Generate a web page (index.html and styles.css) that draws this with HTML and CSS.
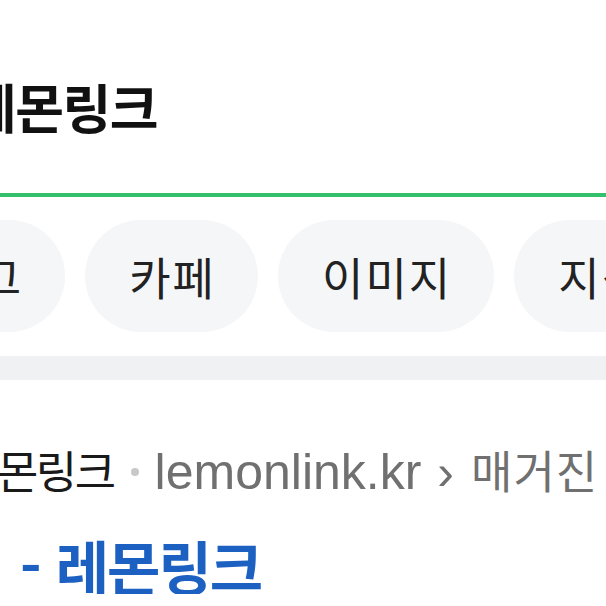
FILE: index.html
```html
<!doctype html>
<html lang="ko">

<head>
    <meta charset="utf-8">
    <title>레몬링크 : 검색</title>
    <meta name="viewport" content="width=device-width, initial-scale=1">
    <link rel="stylesheet" href="styles.css">
</head>

<body>
    <header class="search-head">
        <h1 class="search-head__query">레몬링크</h1>
    </header>

    <nav class="tab-menu">
        <a class="tab-menu__item" href="javascript:void(0)">블로그</a>
        <a class="tab-menu__item" href="javascript:void(0)">카페</a>
        <a class="tab-menu__item" href="javascript:void(0)">이미지</a>
        <a class="tab-menu__item" href="javascript:void(0)">지식iN</a>
    </nav>

    <div class="section-gap"></div>

    <div class="result">
        <div class="result__source">
            <span class="result__site">레몬링크</span><span class="result__dot"></span><span class="result__url">lemonlink.kr</span><span class="result__arrow">›</span><span class="result__path">매거진</span>
        </div>
        <a class="result__title" href="javascript:void(0)">- 레몬링크</a>
    </div>
</body>

</html>
```

FILE: styles.css
```css
* {
    padding: 0;
    margin: 0;
    box-sizing: border-box;
}

body {
    margin: 0;
    overflow: hidden;
    background-color: #fff;
    color: #111;
    font-family: "Liberation Sans", "Noto Sans CJK KR", sans-serif;
}

a {
    text-decoration: none;
}

/* 검색어 영역 */
.search-head {
    padding: 79px 0 60px;
    border-bottom: 4px solid #34bf6c;
}

.search-head__query {
    margin-left: -32px;
    font-family: "Noto Sans CJK KR", sans-serif;
    font-size: 53px;
    font-weight: 700;
    line-height: 54px;
    letter-spacing: -1.5px;
    white-space: nowrap;
}

/* 탭 메뉴 */
.tab-menu {
    display: flex;
    gap: 20px;
    margin-left: -151px;
    padding: 23px 0 24px;
    white-space: nowrap;
}

.tab-menu__item {
    flex: none;
    display: flex;
    align-items: center;
    height: 112px;
    padding: 0 42px 0 44px;
    border-radius: 56px;
    background-color: #f5f6f8;
    color: #222;
    font-family: "Noto Sans CJK KR", sans-serif;
    font-size: 45px;
    line-height: 1;
    letter-spacing: 2px;
}

.section-gap {
    height: 24px;
    background-color: #f0f1f3;
}

/* 검색 결과 */
.result {
    padding-top: 60px;
    white-space: nowrap;
}

.result__source {
    font-size: 50px;
    line-height: 60px;
    color: #707070;
}

.result__site,
.result__path {
    font-family: "Noto Sans CJK KR", sans-serif;
    font-size: 45px;
}

.result__site {
    margin-left: -42px;
    color: #1a1a1a;
    letter-spacing: -2.5px;
}

.result__path {
    letter-spacing: 1px;
}

.result__dot {
    display: inline-block;
    width: 8px;
    height: 8px;
    margin: 0 16px 0 17px;
    border-radius: 50%;
    background-color: #c8c8c8;
    vertical-align: 13px;
}

.result__arrow {
    margin: 0 17px 0 16px;
}

.result__title {
    display: block;
    margin-top: 34px;
    padding-left: 20px;
    color: #1c60c2;
    font-family: "Noto Sans CJK KR", sans-serif;
    font-size: 58px;
    font-weight: 700;
    line-height: 58px;
    letter-spacing: -2px;
    word-spacing: 2px;
}
```
